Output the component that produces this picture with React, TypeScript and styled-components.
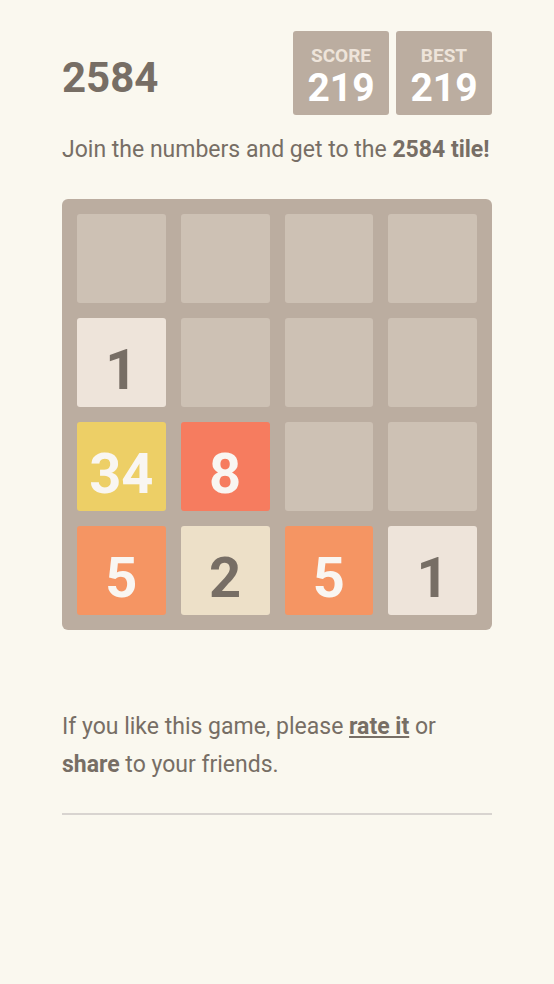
import styled, { createGlobalStyle } from "styled-components"

const Global = createGlobalStyle`
  html, body {
    margin: 0;
    padding: 0;
    background: #faf8ef;
    font-family: Roboto, "Liberation Sans", Arial, sans-serif;
    color: #776e65;
  }
`

const Container = styled.div`
  width: 430px;
  margin: 0 auto;
  padding-top: 31px;
`

const Heading = styled.header`
  display: flex;
  align-items: center;
  justify-content: space-between;
  height: 84px;
`

const Title = styled.h1`
  margin: 0;
  padding-top: 9px;
  font-size: 42px;
  font-weight: 700;
  color: #776e65;
`

const Scores = styled.div`
  display: flex;
  gap: 7px;
`

const ScoreBox = styled.div`
  width: 96px;
  height: 84px;
  background: #bbada0;
  border-radius: 3px;
  display: flex;
  flex-direction: column;
  align-items: center;
  justify-content: center;
  box-sizing: border-box;
  padding-top: 8px;
`

const ScoreLabel = styled.div`
  font-size: 19px;
  font-weight: 700;
  color: #eee4da;
  line-height: 22px;
`

const ScoreValue = styled.div`
  font-size: 39px;
  font-weight: 700;
  color: #ffffff;
  line-height: 42px;
`

const Intro = styled.p`
  margin: 20px 0 0;
  font-size: 23px;
  line-height: 30px;
`

const Board = styled.div`
  margin-top: 34px;
  background: #bbada0;
  border-radius: 6px;
  padding: 15px;
  display: grid;
  grid-template-columns: repeat(4, 1fr);
  grid-auto-rows: 89px;
  gap: 15px;
  height: 431px;
  box-sizing: border-box;
`

const tileColors: Record<number, { bg: string; fg: string }> = {
  0: { bg: "#cdc1b4", fg: "transparent" },
  1: { bg: "#eee4da", fg: "#776e65" },
  2: { bg: "#ede0c8", fg: "#776e65" },
  5: { bg: "#f59563", fg: "#f9f6f2" },
  8: { bg: "#f67c5f", fg: "#f9f6f2" },
  34: { bg: "#edcf66", fg: "#f9f6f2" },
}

const Tile = styled.div<{ $v: number }>`
  border-radius: 3px;
  background: ${(p) => tileColors[p.$v].bg};
  color: ${(p) => tileColors[p.$v].fg};
  display: flex;
  align-items: center;
  justify-content: center;
  box-sizing: border-box;
  padding-top: 14px;
  font-size: 56px;
  font-weight: 700;
`

const Footer = styled.p`
  margin: 78px 0 0;
  font-size: 23px;
  line-height: 38px;
`

const Link = styled.a`
  color: #776e65;
  font-weight: 700;
  text-decoration: underline;
`

const Divider = styled.hr`
  margin: 29px 0 0;
  border: none;
  border-top: 2px solid #d8d4d0;
`

const cells = [0, 0, 0, 0, 1, 0, 0, 0, 34, 8, 0, 0, 5, 2, 5, 1]

export default function App() {
  return (
    <>
      <Global />
      <Container>
        <Heading>
          <Title>2584</Title>
          <Scores>
            <ScoreBox>
              <ScoreLabel>SCORE</ScoreLabel>
              <ScoreValue>219</ScoreValue>
            </ScoreBox>
            <ScoreBox>
              <ScoreLabel>BEST</ScoreLabel>
              <ScoreValue>219</ScoreValue>
            </ScoreBox>
          </Scores>
        </Heading>
        <Intro>
          Join the numbers and get to the <b>2584 tile!</b>
        </Intro>
        <Board>
          {cells.map((v, i) => (
            <Tile key={i} $v={v}>
              {v ? v : ""}
            </Tile>
          ))}
        </Board>
        <Footer>
          If you like this game, please <Link>rate it</Link> or
          <br />
          <b>share</b> to your friends.
        </Footer>
        <Divider />
      </Container>
    </>
  )
}
